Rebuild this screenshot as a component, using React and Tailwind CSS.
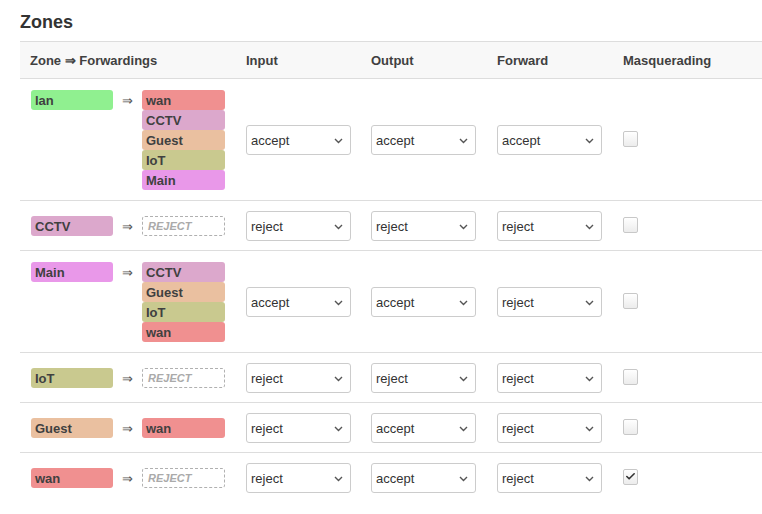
import { Check } from 'lucide-react';

const colors = {
  lan: 'bg-[#90f090]',
  wan: 'bg-[#f09090]',
  CCTV: 'bg-[#dca8cc]',
  Guest: 'bg-[#eac0a0]',
  IoT: 'bg-[#c9c98f]',
  Main: 'bg-[#e998e9]',
};

const zones = [
  { name: 'lan', fwd: ['wan', 'CCTV', 'Guest', 'IoT', 'Main'], input: 'accept', output: 'accept', forward: 'accept', masq: false },
  { name: 'CCTV', fwd: [], input: 'reject', output: 'reject', forward: 'reject', masq: false },
  { name: 'Main', fwd: ['CCTV', 'Guest', 'IoT', 'wan'], input: 'accept', output: 'accept', forward: 'reject', masq: false },
  { name: 'IoT', fwd: [], input: 'reject', output: 'reject', forward: 'reject', masq: false },
  { name: 'Guest', fwd: ['wan'], input: 'reject', output: 'accept', forward: 'reject', masq: false },
  { name: 'wan', fwd: [], input: 'reject', output: 'accept', forward: 'reject', masq: true },
];

function Badge({ name, wide }) {
  return (
    <div className={`${colors[name]} ${wide ? 'w-[83px]' : 'w-[82px]'} h-5 overflow-hidden rounded-[3px] pl-1 pt-px text-[13px] font-bold leading-5 text-[#404040]`}>
      {name}
    </div>
  );
}

function Select({ value }) {
  return (
    <div className="relative w-[105px] h-[30px]">
      <select
        defaultValue={value}
        className="appearance-none w-full h-full border border-[#ccc] rounded-[3px] bg-white pl-[4px] pt-[2px] text-[13px] text-[#333] outline-none"
      >
        <option value="accept">accept</option>
        <option value="reject">reject</option>
        <option value="drop">drop</option>
      </select>
      <svg className="absolute right-[8px] top-[13px] pointer-events-none" width="9" height="6" viewBox="0 0 9 6">
        <path d="M1 1l3.5 3.5L8 1" fill="none" stroke="#555" strokeWidth="1.4" />
      </svg>
    </div>
  );
}

function Checkbox({ checked }) {
  return (
    <div className="w-[15px] h-[16px] mb-[3px] border border-[#c8c8c8] rounded-[2px] bg-gradient-to-b from-white to-[#ececec] flex items-center justify-center">
      {checked && <Check size={11} strokeWidth={3.5} className="text-[#333]" />}
    </div>
  );
}

export default function App() {
  return (
    <div className="min-h-screen bg-white text-[#404040] font-['Liberation_Sans',Arial,sans-serif]">
      <h2 className="pl-5 pt-[10px] mb-[7px] text-[18px] font-bold leading-6 text-[#333]">Zones</h2>

      <div className="ml-5 w-[742px]">
        {/* header */}
        <div className="grid grid-cols-[216px_125px_126px_126px_1fr] items-center h-[38px] pt-[2px] border-y border-[#ddd] bg-[#f8f8f8] text-[13px] font-bold">
          <div className="pl-[10px]">Zone ⇒ Forwardings</div>
          <div className="pl-[10px]">Input</div>
          <div className="pl-[10px]">Output</div>
          <div className="pl-[10px]">Forward</div>
          <div className="pl-[10px]">Masquerading</div>
        </div>

        {zones.map((z, i) => (
          <div
            key={z.name}
            className={`grid grid-cols-[216px_125px_126px_126px_1fr] items-center pt-[10px] pb-[9px] ${i < zones.length - 1 ? 'border-b border-[#ddd]' : ''}`}
          >
            <div className="pl-[11px] my-px flex items-start">
              <Badge name={z.name} />
              <div className="w-[29px] pt-px text-center text-[13px] leading-5 text-[#555]">⇒</div>
              <div className="flex flex-col">
                {z.fwd.length ? (
                  z.fwd.map((f) => <Badge key={f} name={f} wide />)
                ) : (
                  <div className="w-[83px] h-5 border border-dashed border-[#b0b0b0] rounded-[3px] pl-[5px] text-[11px] italic font-bold leading-[18px] text-[#aaa]">
                    REJECT
                  </div>
                )}
              </div>
            </div>
            <div className="pl-[10px]"><Select value={z.input} /></div>
            <div className="pl-[10px]"><Select value={z.output} /></div>
            <div className="pl-[10px]"><Select value={z.forward} /></div>
            <div className="pl-[10px]"><Checkbox checked={z.masq} /></div>
          </div>
        ))}
      </div>
    </div>
  );
}
